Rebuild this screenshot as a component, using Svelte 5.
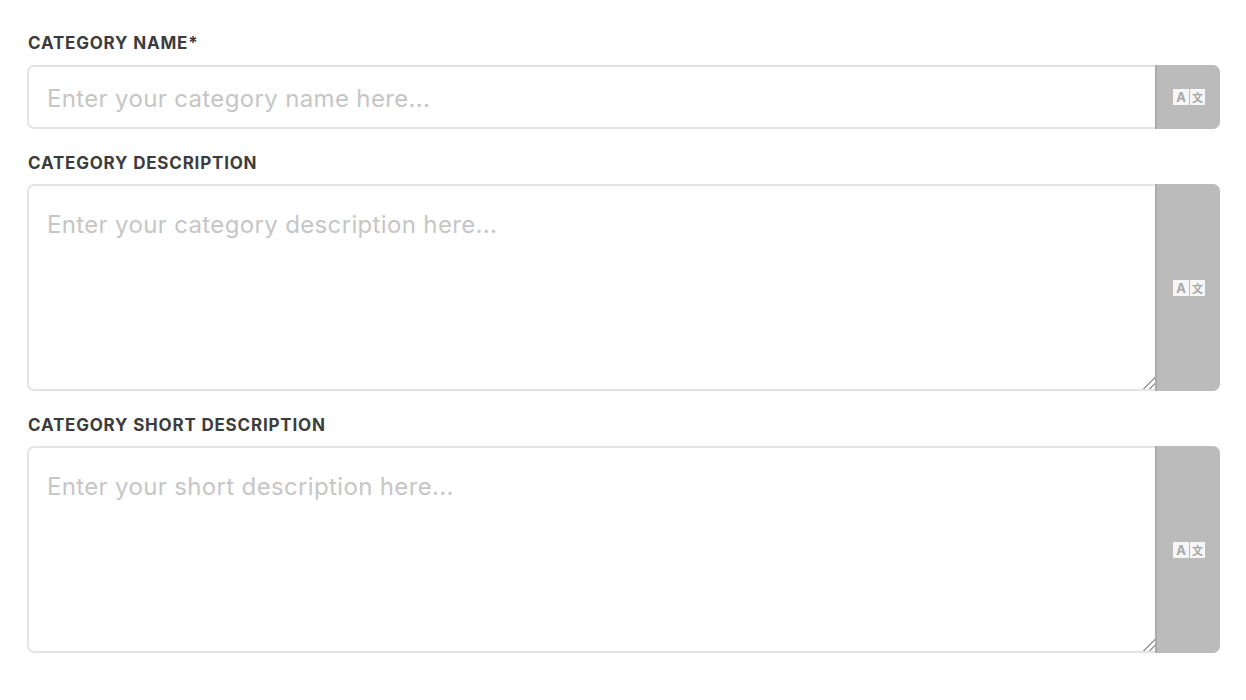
<script>
  const fields = [
    { label: 'CATEGORY NAME*', placeholder: 'Enter your category name here...', multi: false },
    { label: 'CATEGORY DESCRIPTION', placeholder: 'Enter your category description here...', multi: true },
    { label: 'CATEGORY SHORT DESCRIPTION', placeholder: 'Enter your short description here...', multi: true }
  ];
</script>

<div class="form">
  {#each fields as f}
    <div class="field">
      <div class="label">{f.label}</div>
      <div class="group" class:multi={f.multi}>
        {#if f.multi}
          <textarea class="control" placeholder={f.placeholder}></textarea>
        {:else}
          <input class="control" type="text" placeholder={f.placeholder} />
        {/if}
        <div class="addon">
          <span class="tile">A</span>
          <span class="tile cjk">文</span>
        </div>
      </div>
    </div>
  {/each}
</div>

<style>
  :global(body) {
    margin: 0;
    background: #fff;
  }
  .form {
    padding: 33px 26px 0 28px;
    display: flex;
    flex-direction: column;
    gap: 24px;
    font-family: Inter, "Liberation Sans", sans-serif;
  }
  .label {
    font-size: 17px;
    line-height: 20px;
    font-weight: 700;
    color: #3c3c3c;
    letter-spacing: 0.8px;
    margin-bottom: 11px;
  }
  .field:first-child .label {
    margin-bottom: 12px;
  }
  .group {
    display: flex;
    height: 64px;
    margin-left: -1px;
  }
  .group.multi {
    height: 207px;
  }
  .control {
    flex: 1;
    min-width: 0;
    box-sizing: border-box;
    margin: 0;
    border: 2px solid #e4e4e4;
    border-right: 0;
    border-radius: 7px 0 0 7px;
    padding: 2px 18px 0;
    font-family: inherit;
    font-size: 24px;
    letter-spacing: 0.35px;
    color: #333;
    background: #fff;
    outline: none;
  }
  textarea.control {
    padding-top: 23px;
    line-height: 32px;
    resize: vertical;
    height: 100%;
  }
  textarea.control::-webkit-resizer {
    background: linear-gradient(
      135deg,
      transparent 0 12.4px,
      #9c9c9c 12.4px 13.8px,
      transparent 13.8px 16.6px,
      #9c9c9c 16.6px 18px,
      transparent 18px
    );
  }
  .control::placeholder {
    color: #c6c6c6;
    opacity: 1;
  }
  .addon {
    width: 65px;
    flex: none;
    box-sizing: border-box;
    background: #bbbbbb;
    border-left: 2px solid #aaaaaa;
    border-radius: 0 7px 7px 0;
    padding-left: 1px;
    display: flex;
    gap: 1px;
    align-items: center;
    justify-content: center;
  }
  .tile {
    width: 16px;
    height: 16px;
    background: #f6f6f6;
    color: #a8a8a8;
    font-size: 13px;
    font-weight: 700;
    line-height: 16px;
    text-align: center;
  }
  .cjk {
    width: 15px;
    font-family: "Noto Sans CJK SC", sans-serif;
    font-size: 11px;
  }
</style>
